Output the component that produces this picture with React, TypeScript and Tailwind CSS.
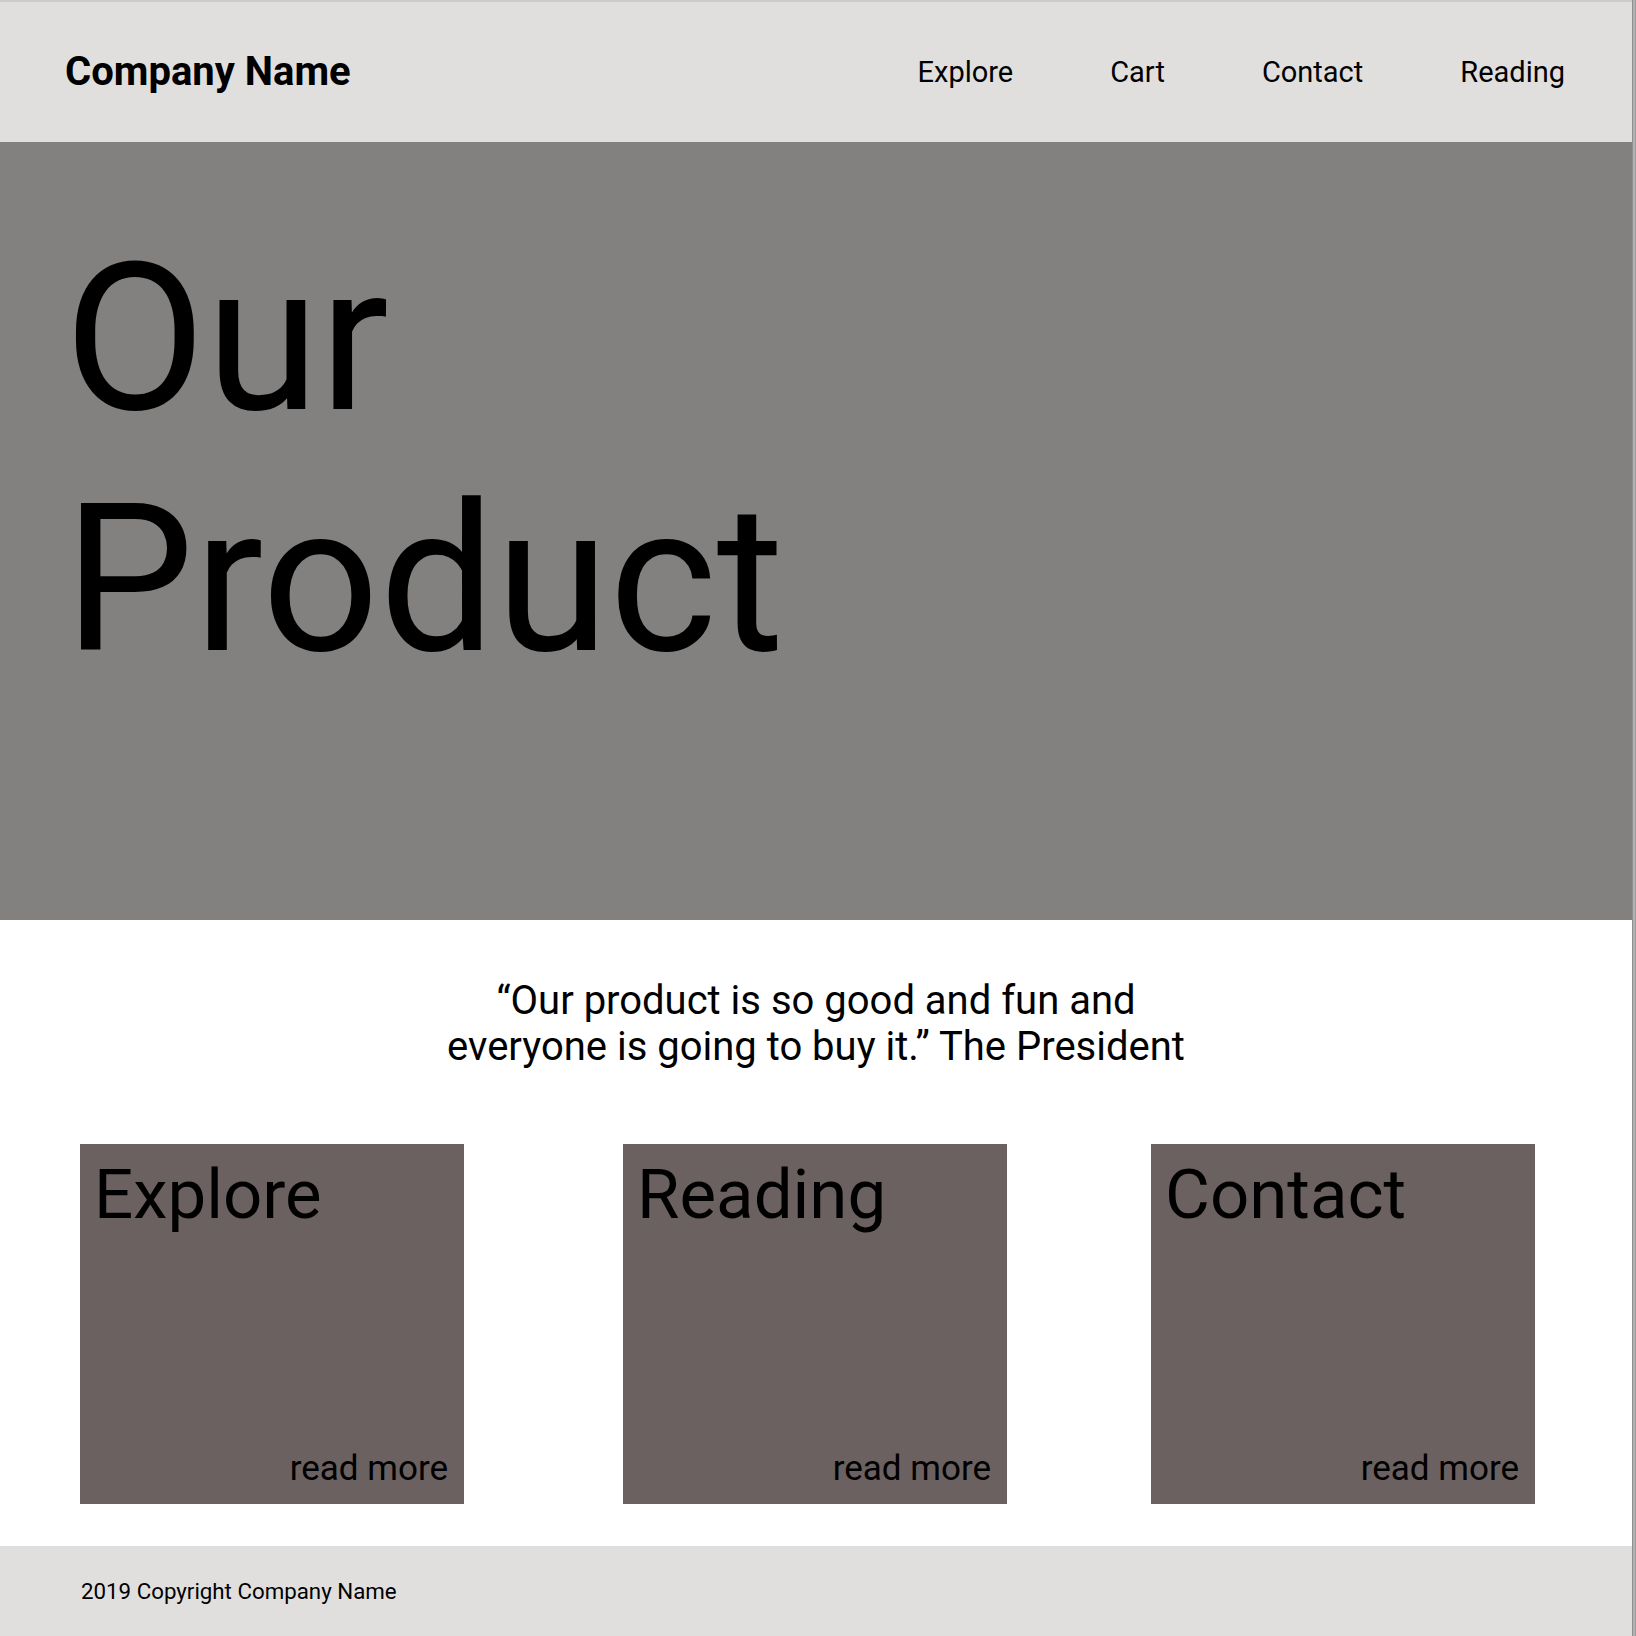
import React from "react";

function Card({ title }: { title: string }) {
  return (
    <div className="w-[384px] h-[360px] bg-[#6b6160] flex flex-col justify-between shrink-0">
      <div className="pl-[14px] pt-4 text-[69px] leading-none text-black">{title}</div>
      <div className="self-end pr-4 pb-[15px] text-[35px] leading-[40px] text-black">read more</div>
    </div>
  );
}

export default function App() {
  return (
    <div className="w-[1636px] h-[1636px] flex bg-white text-black font-['Roboto',sans-serif] overflow-hidden">
      <div className="w-[1632px] flex flex-col">
        <div className="h-[2px] bg-[#cbcbcb]" />
        <header className="h-[140px] bg-[#e0dfde] pl-16 pr-[67px] flex items-center justify-between">
          <div className="ml-px text-[40px] font-bold leading-none">Company Name</div>
          <nav className="flex items-center gap-[97px] text-[29px] leading-none">
            <span>Explore</span>
            <span>Cart</span>
            <span>Contact</span>
            <span>Reading</span>
          </nav>
        </header>
        <section className="h-[778px] bg-[#82817f] px-16 pt-[76px]">
          <h1 className="text-[206px] leading-[241px] font-normal">
            Our
            <br />
            Product
          </h1>
        </section>
        <section className="h-[626px] bg-white flex flex-col">
          <p className="pt-[58px] text-center text-[40px] leading-[46px]">
            “Our product is so good and fun and
            <br />
            everyone is going to buy it.” The President
          </p>
          <div className="mt-auto mb-[42px] flex pl-[80px]">
            <Card title="Explore" />
            <div className="ml-[159px]">
              <Card title="Reading" />
            </div>
            <div className="ml-[144px]">
              <Card title="Contact" />
            </div>
          </div>
        </section>
        <footer className="h-[90px] bg-[#e0dfde] pl-[81px] pt-[2px] flex items-center text-[22.3px]">
          2019 Copyright Company Name
        </footer>
      </div>
      <div className="w-[4px] flex">
        <div className="w-[1px] bg-[#8f8f8f]" />
        <div className="w-[2px] bg-[#b3b3b3]" />
        <div className="w-[1px] bg-[#9a9a9a]" />
      </div>
    </div>
  );
}
